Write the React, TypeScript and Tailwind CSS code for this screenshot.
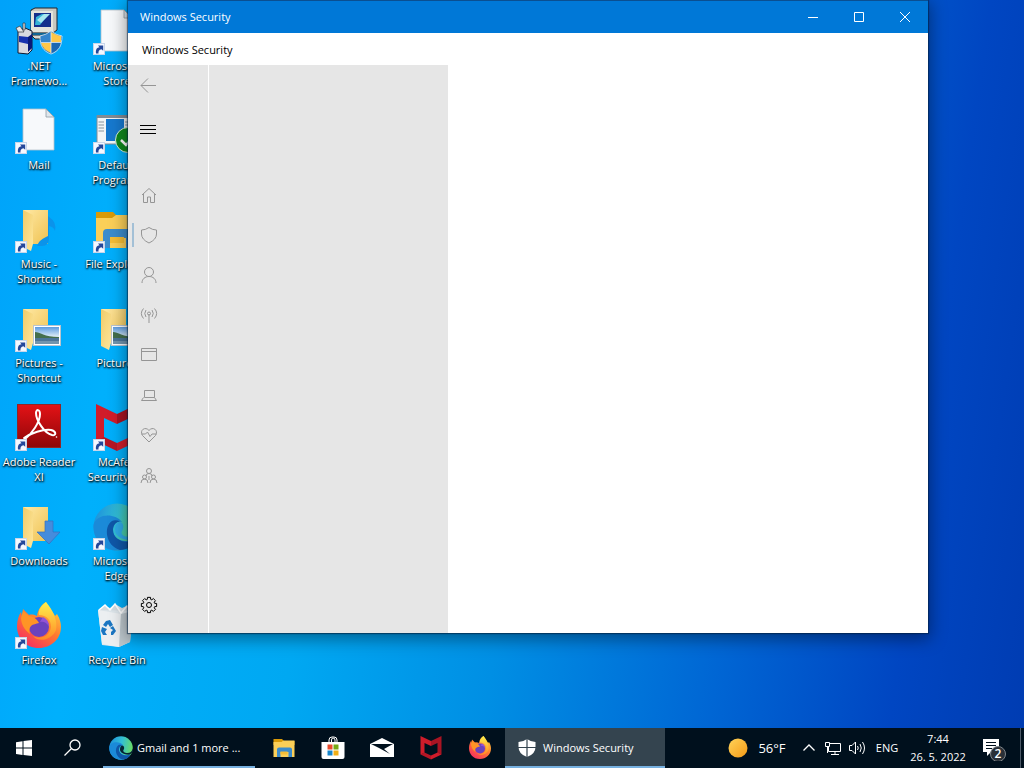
import type { ReactNode } from 'react';

function ShortcutArrow() {
  return (
    <g>
      <rect x="0.5" y="35.5" width="11" height="11" fill="#f4f8ff" stroke="#c9d6ea" />
      <path d="M3 45.5C2.500 41 4 39.500 6.500 39.200L5 37.500H10.200V42.800L8.500 41.200C6 41.800 5.200 43 5.500 45.500Z" fill="#24479a" />
    </g>
  );
}

function Page() {
  return (
    <g>
      <path d="M8 2H31L39 10V43H8Z" fill="#f7f9fb" stroke="#b5c2cc" strokeWidth="0.8" />
      <path d="M31 2V10H39Z" fill="#dfe7ec" stroke="#8f9ca6" strokeWidth="0.8" />
    </g>
  );
}

function Folder() {
  return (
    <g>
      <path d="M8 4H33V38H14Z" fill="url(#folderBack)" />
      <path d="M8 4L18 9V38L16 45L8 41Z" fill="url(#folderFront)" />
    </g>
  );
}

function Landscape() {
  return (
    <g>
      <rect x="18.500" y="20.500" width="27" height="20" fill="#fff" stroke="#b9c4cf" />
      <rect x="20" y="22" width="24" height="17" fill="url(#sky)" />
      <path d="M20 27C25 27 29 32 44 32V34H20Z" fill="#446f4c" />
      <path d="M20 33H44V39H20Z" fill="#4c7598" />
      <path d="M20 36H44V39H20Z" fill="#7395ae" />
    </g>
  );
}

function EdgeShape({ gap }: { gap: string }) {
  return (
    <g>
      <circle cx="24" cy="24" r="23.500" fill="url(#edgeTop)" />
      <path d="M0.500 22C3 11 21 9 29 19C26 17 20 20 20 27C20 36 30 41 43 36C38 45 31 47.500 24 47.500C10 47.500 0 37 0.500 22Z" fill="#1b8ad8" />
      <path d="M19 18C10 24 13 43 27 47C34 47 40 43 43 37C31 42 20 36 20 27C20 22 23 19 27 18.500C24 17 21 17 19 18Z" fill="#0f57a8" />
      <path d="M27 19C31 20 31 25 29 28C27 31 31 34 37 34C42 34 46 31 47.500 25L48 31C46 36 41 38 35 37C27 36 22 32 22 27C22 22 24 19 27 19Z" fill={gap} />
    </g>
  );
}

function FirefoxShape() {
  return (
    <g>
      <path d="M24 46C10 46 2 36 2 24C2 18 4 13 6 10L7 14L8 7L14 13C17 12 20 13 22 14C23 7 27 2 31 0C32 6 38 9 40 14L42 12C45 17 46 21 46 25C46 37 36 46 24 46Z" fill="url(#foxBody)" />
      <path d="M31 0C26 4 23 8 24 13C32 13 36 18 36 25C35 34 26 38 18 34C24 41 37 38 41 28C43 19 38 8 31 0Z" fill="url(#foxTail)" />
      <circle cx="24" cy="25" r="10" fill="#6b42bd" />
      <path d="M28 15C32 17 34 20 34 24C31 20 28 19 25 20Z" fill="#9353d6" />
      <path d="M8 9L14 14C18 14 22 17 24 21C21 22 18 22 16 24C14 26 14 29 15 32C9 28 6 21 6 16Z" fill="#ff9425" />
    </g>
  );
}

function McAfeeShape() {
  return (
    <g>
      <path d="M3 0L24 10V20L11 14V34L3 37Z" fill="#d01c2a" />
      <path d="M45 0L24 10V20L37 14V34L45 37Z" fill="#a91423" />
      <path d="M3 37L11 33L24 39V47Z" fill="#b51625" />
      <path d="M45 37L37 33L24 39V47Z" fill="#d01c2a" />
    </g>
  );
}

function ExplorerShape() {
  return (
    <g>
      <path d="M3 6H20L24 10H45V18H3Z" fill="#d99a08" />
      <path d="M3 12H19L23 9H45V42H3Z" fill="#fbcf58" />
      <path d="M10 42V27Q10 23 14 23H36Q40 23 40 27V42H33V32H17V42Z" fill="#3c8ccc" />
      <path d="M17 31H31V37H17Z" fill="#f5bd35" />
    </g>
  );
}

const desktopArt: Record<string, ReactNode> = {
  net: (
    <g>
      <path d="M16 2L20 0H42V22L38 25H16Z" fill="#c8c8c0" stroke="#20242c" />
      <path d="M16 3H38V24H16Z" fill="#e4e4dc" />
      <path d="M19 5H36V19H19Z" fill="#14308c" />
      <path d="M20 17L21 9L27 6H34L25 17Z" fill="#35b4d8" />
      <path d="M22 12L29 6H35L26 15Z" fill="#a7e7ef" />
      <path d="M16 27H40L45 31H20Z" fill="#d8d8d0" stroke="#20242c" />
      <path d="M3 23L10 20L17 23V42L13 46L3 45Z" fill="#d9d9df" stroke="#101830" />
      <path d="M4 28L13 29V36L4 34Z" fill="#1730ad" />
      <path d="M13 29L17 26V40L13 44Z" fill="#091978" />
      <path d="M1 20L5 18L9 24H3ZM8 22V15H10V22Z" fill="#e8e8e8" stroke="#30343c" strokeWidth="0.7" />
      <path d="M25 28Q31 27 36 23Q41 27 47 28C47 38 44 43 36 46C28 43 25 38 25 28Z" fill="#1d67b2" />
      <path d="M36 24V34H26L25.500 28Q31 27 36 24Z" fill="#3484cb" />
      <path d="M36 24Q41 27 46 28V34H36Z" fill="#ffc749" />
      <path d="M26 35H36V45Q28 42 26 35Z" fill="#ffc749" />
      <path d="M25 28Q31 27 36 23Q41 27 47 28C47 38 44 43 36 46C28 43 25 38 25 28M36 24V45M26 34.500H46" fill="none" stroke="#e5eff5" strokeWidth="0.8" />
    </g>
  ),
  page: <Page />,
  defaults: (
    <g>
      <rect x="4" y="9" width="44" height="28" fill="#f2f5f7" stroke="#818b95" />
      <rect x="4" y="8" width="44" height="3" fill="#818b95" />
      <path d="M5.500 15H11M5.500 18H11M5.500 21H11M5.500 24H11M32 15H38M32 18H38" stroke="#8b959e" />
      <rect x="13" y="12" width="18" height="22" fill="#1679cf" />
      <circle cx="35" cy="33" r="12.500" fill="#10891d" stroke="#d8eddb" />
      <path d="M28 33L33 38L42 28" fill="none" stroke="#fff" strokeWidth="2.500" />
    </g>
  ),
  music: (
    <g>
      <Folder />
      <path d="M22 40Q24 34 31 31L33 30V10L34 11Q42 16 40 25Q39 21 34 20V32Q34 40 27 40Z" fill="#0b93ea" />
    </g>
  ),
  pictures: (
    <g>
      <Folder />
      <Landscape />
    </g>
  ),
  downloads: (
    <g>
      <Folder />
      <path d="M30 18H38V29H45L34 41L22 29H30Z" fill="#458cdc" stroke="#3470c0" strokeWidth="0.7" />
    </g>
  ),
  explorer: <ExplorerShape />,
  adobe: (
    <g>
      <rect x="2.500" y="0.500" width="43" height="43" fill="url(#adobeRed)" stroke="#8f2527" />
      <path d="M9 36C17 30 25 18 25 10C25 5 21 5 21 9C21 16 29 29 37 31C42 32 41 27 36 26C28 25 16 29 9 34" fill="none" stroke="#fff" strokeWidth="2" strokeLinecap="round" />
      <circle cx="41.500" cy="33" r="0.800" fill="#fff" />
    </g>
  ),
  mcafee: <McAfeeShape />,
  edge: <EdgeShape gap="#2fa9e6" />,
  firefox: <FirefoxShape />,
  recycle: (
    <g>
      <path d="M5 8L11 4L17 6L22 2L29 6L36 3L40 10L37 40L26 45L9 43Z" fill="#dde5ea" />
      <path d="M5 8L28 12L26 45L9 42Z" fill="#eceff1" />
      <path d="M28 12L40 9L37 40L26 45Z" fill="#bec8ce" />
      <path d="M6 8L12 3L17 8L22 2L28 11L34 4L40 9" fill="#d3dbe0" stroke="#fff" strokeWidth="1.500" />
      <path d="M13 19L17 18L20 23L17 25L15 22L13 25L10 23ZM20 24L23 29L20 33H18V30L20 28L17 26ZM9 25L14 27L12 30L14 33H10L8 29Z" fill="#1b76c2" />
    </g>
  ),
};

type Shortcut = { art: string; lines: string[]; arrow: boolean };

const columns: Shortcut[][] = [
  [
    { art: 'net', lines: ['.NET', 'Framewo...'], arrow: false },
    { art: 'page', lines: ['Mail'], arrow: true },
    { art: 'music', lines: ['Music -', 'Shortcut'], arrow: true },
    { art: 'pictures', lines: ['Pictures -', 'Shortcut'], arrow: true },
    { art: 'adobe', lines: ['Adobe Reader', 'XI'], arrow: true },
    { art: 'downloads', lines: ['Downloads'], arrow: true },
    { art: 'firefox', lines: ['Firefox'], arrow: true },
  ],
  [
    { art: 'page', lines: ['Microsoft', 'Store'], arrow: true },
    { art: 'defaults', lines: ['Default', 'Programs'], arrow: true },
    { art: 'explorer', lines: ['File Explorer'], arrow: true },
    { art: 'pictures', lines: ['Pictures'], arrow: false },
    { art: 'mcafee', lines: ['McAfee', 'Security S...'], arrow: true },
    { art: 'edge', lines: ['Microsoft', 'Edge'], arrow: true },
    { art: 'recycle', lines: ['Recycle Bin'], arrow: false },
  ],
];

function Gradients() {
  return (
    <svg className="absolute h-0 w-0" aria-hidden="true">
      <defs>
        <linearGradient id="folderBack" x1="0" y1="0" x2="1" y2="1">
          <stop offset="0" stopColor="#ffe9a6" />
          <stop offset="1" stopColor="#efc251" />
        </linearGradient>
        <linearGradient id="folderFront" x1="0" y1="0" x2="1" y2="1">
          <stop offset="0" stopColor="#f0cb69" />
          <stop offset="1" stopColor="#ffe79c" />
        </linearGradient>
        <linearGradient id="sky" x1="0" y1="0" x2="0" y2="1">
          <stop offset="0" stopColor="#5b9be0" />
          <stop offset="0.6" stopColor="#e5f1f8" />
        </linearGradient>
        <linearGradient id="edgeTop" x1="0" y1="0.300" x2="1" y2="0.500">
          <stop offset="0" stopColor="#1d91dc" />
          <stop offset="0.5" stopColor="#32bfd5" />
          <stop offset="1" stopColor="#6bdc61" />
        </linearGradient>
        <linearGradient id="foxBody" x1="0.9" y1="0" x2="0.2" y2="1">
          <stop offset="0" stopColor="#ffdc3d" />
          <stop offset="0.5" stopColor="#ff7830" />
          <stop offset="1" stopColor="#f52b62" />
        </linearGradient>
        <linearGradient id="foxTail" x1="0" y1="0" x2="0" y2="1">
          <stop offset="0" stopColor="#fff04c" />
          <stop offset="1" stopColor="#ff8a25" />
        </linearGradient>
        <linearGradient id="adobeRed" x1="0" y1="0" x2="0" y2="1">
          <stop offset="0" stopColor="#e41216" />
          <stop offset="1" stopColor="#8c0608" />
        </linearGradient>
        <linearGradient id="sun" x1="0" y1="0" x2="1" y2="1">
          <stop offset="0" stopColor="#ffd35a" />
          <stop offset="1" stopColor="#f59a16" />
        </linearGradient>
      </defs>
    </svg>
  );
}

function DesktopIcon({ item }: { item: Shortcut }) {
  return (
    <button type="button" className="flex h-[99px] w-[78px] flex-col items-center pt-2">
      <svg viewBox="0 0 48 48" className="h-12 w-12 shrink-0 overflow-visible" aria-hidden="true">
        {desktopArt[item.art]}
        {item.arrow && <ShortcutArrow />}
      </svg>
      <span className="flex flex-col items-center pt-[2px] leading-[15px] whitespace-nowrap text-white [text-shadow:1px_1px_2px_#000,0_1px_2px_#000]">
        {item.lines.map((line) => (
          <span key={line}>{line}</span>
        ))}
      </span>
    </button>
  );
}

const navItems: { label: string; art: ReactNode; active?: boolean }[] = [
  { label: 'Home', art: <path d="M2 9L9 2.500L16 9M3.500 8V16.500H7.500V11H10.500V16.500H14.500V8" /> },
  { label: 'Virus & threat protection', active: true, art: <path d="M9 1.500Q12.500 4 16.500 4V8Q16.500 13.500 9 17Q1.500 13.500 1.500 8V4Q5.500 4 9 1.500Z" /> },
  { label: 'Account protection', art: <path d="M9 1.500A4.500 4.500 0 1 1 9 10.500A4.500 4.500 0 1 1 9 1.500M2 17C2 13 5 10.500 9 10.500S16 13 16 17" /> },
  { label: 'Firewall & network protection', art: <path d="M9 8V17M7.500 7.500A1.500 1.500 0 1 1 10.500 7.500A1.500 1.500 0 1 1 7.500 7.500M6 4Q3.500 7.500 6 11M12 4Q14.500 7.500 12 11M3.500 2.500Q-0.800 7.500 3.500 12.500M14.500 2.500Q18.800 7.500 14.500 12.500" /> },
  { label: 'App & browser control', art: <path d="M1.500 2.500H16.500V14.500H1.500ZM1.500 5.500H16.500" /> },
  { label: 'Device security', art: <path d="M4.500 4.500H14.500V11.500H4.500ZM3.500 11.500L1.500 14.500H16.500L14.500 11.500" /> },
  { label: 'Device performance & health', art: <path d="M9 16L2.500 9.500C-1 4 5.500 0 9 4.500C12.500 0 19 4 15.500 9.500ZM1.500 8H5.500L7.500 6L10 10.500L12 8H16.500" /> },
  { label: 'Family options', art: <path d="M6.500 5A2.500 2.500 0 1 1 11.500 5A2.500 2.500 0 1 1 6.500 5M6 10Q6 7.500 9 7.500T12 10M2.500 11A2 2 0 1 1 6.500 11A2 2 0 1 1 2.500 11M11.500 11A2 2 0 1 1 15.500 11A2 2 0 1 1 11.500 11M1 17Q1 13 4.500 13T8 17M10 17Q10 13 13.500 13T17 17M9 10V14" /> },
];

function NavButton({ label, children, dark, active }: { label: string; children: ReactNode; dark?: boolean; active?: boolean }) {
  return (
    <button type="button" aria-label={label} className="flex h-10 w-full items-center">
      <span className={active ? 'ml-1 mr-[6px] h-6 w-[2px] bg-[#a3c0d6]' : 'ml-1 mr-[6px] h-6 w-[2px]'} />
      <svg viewBox="0 0 18 18" className={dark ? 'size-[18px] text-black' : 'size-[18px] text-[#959595]'} fill="none" stroke="currentColor" aria-hidden="true">
        {children}
      </svg>
    </button>
  );
}

function gearPath() {
  const points: string[] = [];
  for (let i = 0; i < 8; i++) {
    const a = (i * Math.PI) / 4;
    [[-0.28, 5.9], [-0.2, 7.8], [0.2, 7.8], [0.28, 5.9]].forEach(([d, r]) => {
      points.push(`${(9 + r * Math.cos(a + d)).toFixed(2)} ${(9 + r * Math.sin(a + d)).toFixed(2)}`);
    });
  }
  return `M${points.join('L')}Z`;
}

function SecurityWindow() {
  return (
    <section aria-label="Windows Security" className="absolute top-0 right-24 left-32 flex h-[633px] flex-col bg-white shadow-[0_4px_16px_2px_rgba(0,0,0,0.4),0_0_1px_1px_rgba(0,40,80,0.55)]">
      <header className="flex h-[33px] shrink-0 items-center border-t border-[#0a4f91] bg-[#0078d7] pl-3 text-white">
        <h1 className="flex-1">Windows Security</h1>
        <button type="button" aria-label="Minimize" className="flex h-8 w-[46px] items-center justify-center">
          <svg className="size-[10px]" viewBox="0 0 10 10" stroke="currentColor" aria-hidden="true"><path d="M0 5.500H10" /></svg>
        </button>
        <button type="button" aria-label="Maximize" className="flex h-8 w-[46px] items-center justify-center">
          <svg className="size-[10px]" viewBox="0 0 10 10" fill="none" stroke="currentColor" aria-hidden="true"><path d="M0.500 0.500H9.500V9.500H0.500Z" /></svg>
        </button>
        <button type="button" aria-label="Close" className="flex h-8 w-[46px] items-center justify-center">
          <svg className="size-[10px]" viewBox="0 0 10 10" stroke="currentColor" aria-hidden="true"><path d="M0 0L10 10M10 0L0 10" /></svg>
        </button>
      </header>
      <p className="flex h-8 shrink-0 items-center pt-[2px] pl-[14px] text-black">Windows Security</p>
      <div className="flex flex-1">
        <nav className="flex w-20 flex-col bg-[#e6e6e6] pb-2">
          <NavButton label="Back"><path d="M16 9.500H1M8 2.500L1 9.500L8 16.500" /></NavButton>
          <div className="mt-1">
            <NavButton label="Menu" dark><path d="M0 5.500H16M0 9.500H16M0 13.500H16" /></NavButton>
          </div>
          <div className="mt-[26px] flex flex-col">
            {navItems.map((item) => (
              <NavButton key={item.label} label={item.label} active={item.active}>{item.art}</NavButton>
            ))}
          </div>
          <div className="mt-auto">
            <NavButton label="Settings" dark>
              <path d={gearPath()} />
              <circle cx="9" cy="9" r="2.500" />
            </NavButton>
          </div>
        </nav>
        <div className="ml-px w-[239px] bg-[#e6e6e6]" />
        <main className="flex-1 bg-white" />
      </div>
    </section>
  );
}

function TaskIcon({ label, children }: { label: string; children: ReactNode }) {
  return (
    <button type="button" aria-label={label} className="flex h-10 w-12 items-center justify-center">
      <svg viewBox="0 0 24 24" className="size-6" aria-hidden="true">{children}</svg>
    </button>
  );
}

function Taskbar() {
  return (
    <footer className="flex h-10 shrink-0 items-center bg-[#00101d] text-white">
      <TaskIcon label="Start">
        <path d="M4 6.200L10.500 5.200V11.500H4ZM11.500 5L20 4V11.500H11.500ZM4 12.500H10.500V18.900L4 17.900ZM11.500 12.500H20V20L11.500 19Z" fill="#fff" />
      </TaskIcon>
      <TaskIcon label="Search">
        <circle cx="15" cy="9" r="5" fill="none" stroke="#fff" strokeWidth="1.300" />
        <path d="M11.500 12.500L4.500 19.500" stroke="#fff" strokeWidth="1.300" />
      </TaskIcon>
      <button type="button" className="ml-[7px] flex h-10 w-[152px] items-center gap-1 border-b-2 border-[#76b0e0] pt-[2px] pl-[6px] whitespace-nowrap">
        <svg viewBox="0 0 48 48" className="size-6 shrink-0" aria-hidden="true"><EdgeShape gap="#062434" /></svg>
        Gmail and 1 more ...
      </button>
      <div className="ml-[5px] flex gap-px">
        <TaskIcon label="File Explorer"><svg viewBox="0 0 48 48" width="24" height="24"><ExplorerShape /></svg></TaskIcon>
        <TaskIcon label="Microsoft Store">
          <path d="M8 7V4Q8 1 11 1H13Q16 1 16 4V7M10.500 7V4Q10.500 2 12 2Q14 2 14 4V7" fill="none" stroke="#fff" />
          <path d="M0.500 6H23.500V21Q23.500 23 21.500 23H2.500Q0.500 23 0.500 21Z" fill="#fff" />
          <path d="M6.500 8.500H11.500V13.500H6.500Z" fill="#e94b2c" />
          <path d="M12.500 8.500H17.500V13.500H12.500Z" fill="#76a916" />
          <path d="M6.500 14.500H11.500V19.500H6.500Z" fill="#1686cc" />
          <path d="M12.500 14.500H17.500V19.500H12.500Z" fill="#f0ae17" />
        </TaskIcon>
        <TaskIcon label="Mail">
          <path d="M0 8L12 2L24 8V21H0Z" fill="#fff" />
          <path d="M1 8H23L14 13L20 18L9 12Z" fill="#00101d" />
        </TaskIcon>
        <TaskIcon label="McAfee"><svg viewBox="0 0 48 48" width="24" height="24"><McAfeeShape /></svg></TaskIcon>
        <TaskIcon label="Firefox"><svg viewBox="0 0 48 48" width="24" height="24"><FirefoxShape /></svg></TaskIcon>
      </div>
      <button type="button" className="ml-px flex h-10 w-40 items-center gap-[6px] border-b-2 border-[#76b0e0] bg-[#34444f] pt-[2px] pl-3 whitespace-nowrap">
        <svg viewBox="0 0 20 20" className="size-5 shrink-0" aria-hidden="true">
          <path d="M10 1Q14 4 18.500 4V9Q18.500 16 10 19Q1.500 16 1.500 9V4Q6 4 10 1Z" fill="#fff" />
          <path d="M10 1V19M1 9.500H19" stroke="#34444f" strokeWidth="1.200" />
        </svg>
        Windows Security
      </button>
      <div className="ml-auto flex items-center whitespace-nowrap">
        <button type="button" className="flex items-center gap-[10px]">
          <svg viewBox="0 0 20 20" className="size-5" aria-hidden="true"><circle cx="10" cy="10" r="9.500" fill="url(#sun)" /></svg>
          <span className="w-7 text-[13px] font-normal">56°F</span>
        </button>
        <button type="button" aria-label="Show hidden icons" className="ml-[11px] flex h-10 w-6 items-center justify-center">
          <svg viewBox="0 0 12 12" className="size-3" fill="none" stroke="currentColor" strokeWidth="1.300" aria-hidden="true"><path d="M0.500 8.500L6 3L11.500 8.500" /></svg>
        </button>
        <button type="button" aria-label="Network" className="flex h-10 w-6 items-center justify-center">
          <svg viewBox="0 0 16 16" className="size-4" fill="none" stroke="currentColor" aria-hidden="true"><path d="M5 3.500H15.500V11.500H3.500V7M10 11.500V14.500M6 14.500H14M0.500 2.500H4.500V6.500H0.500ZM2.500 6.500V13" /></svg>
        </button>
        <button type="button" aria-label="Volume" className="flex h-10 w-6 items-center justify-center">
          <svg viewBox="0 0 18 16" className="h-4 w-[18px]" fill="none" stroke="currentColor" aria-hidden="true"><path d="M1.500 5.500H4L7.500 2V14L4 10.500H1.500ZM9.500 6Q11 8 9.500 10M12 4Q14.500 8 12 12M14.500 2Q18.500 8 14.500 14" /></svg>
        </button>
        <button type="button" className="ml-[6px] w-6">ENG</button>
        <button type="button" className="ml-[7px] w-16 text-center leading-[18px]">
          <time className="flex flex-col items-center"><span>7:44</span><span>26. 5. 2022</span></time>
        </button>
        <button type="button" aria-label="Notifications" className="ml-[7px] flex h-10 w-9 items-center justify-center">
          <svg viewBox="0 0 26 26" className="size-[26px]" aria-hidden="true">
            <path d="M1 4H17V17H9L5 21V17H1Z" fill="#fff" />
            <path d="M4 7.500H14M4 10.500H14M4 13.500H10" stroke="#00101d" />
            <circle cx="16" cy="19" r="7.500" fill="#2a3037" stroke="#7f858a" />
            <text x="16" y="23" textAnchor="middle" fontSize="12" fontWeight="600" fill="#fff">2</text>
          </svg>
        </button>
        <span className="mr-[3px] ml-[7px] h-10 w-px bg-[#4c5967]" />
      </div>
    </footer>
  );
}

export default function App() {
  return (
    <div className="flex min-h-screen flex-col overflow-hidden font-['Open_Sans','Noto_Sans',sans-serif] text-[11px] leading-4 font-medium">
      <Gradients />
      <div className="relative flex-1 bg-[linear-gradient(98deg,#00a2fa_0%,#00b0fc_14%,#00a8f2_34%,#008fe4_52%,#0066d4_72%,#0046c2_88%,#003cb2_100%)]">
        <div className="flex">
          {columns.map((column, index) => (
            <div key={index} className="flex flex-col">
              {column.map((item) => (
                <DesktopIcon key={item.lines.join(' ')} item={item} />
              ))}
            </div>
          ))}
        </div>
        <SecurityWindow />
      </div>
      <Taskbar />
    </div>
  );
}
